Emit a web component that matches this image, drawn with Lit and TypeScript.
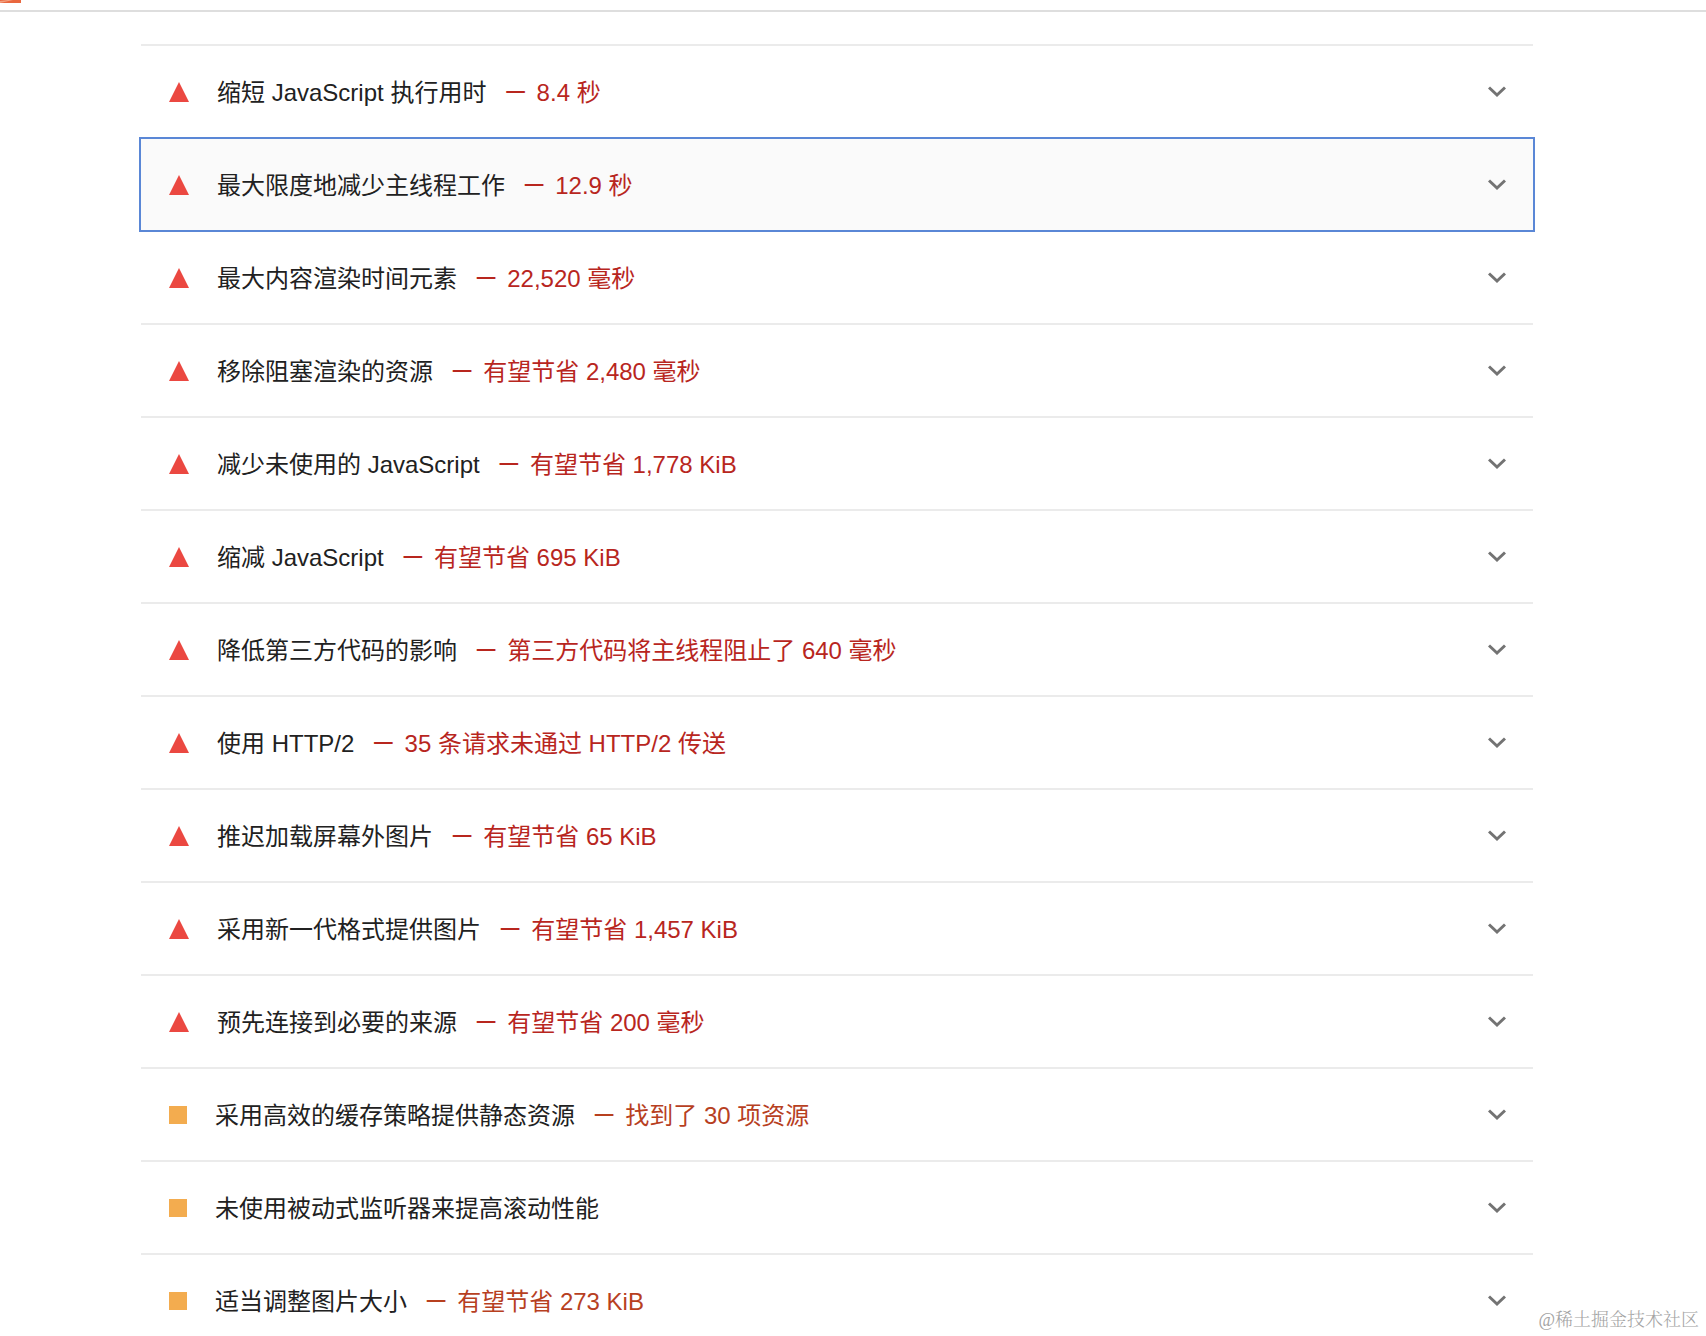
import { LitElement, html, css, svg, nothing } from "lit";
import { customElement, property, state } from "lit/decorators.js";

type Level = "fail" | "average";

interface Audit {
  level: Level;
  title: string;
  detail?: string;
}

const AUDITS: Audit[] = [
  { level: "fail", title: "缩短 JavaScript 执行用时", detail: "8.4 秒" },
  { level: "fail", title: "最大限度地减少主线程工作", detail: "12.9 秒" },
  { level: "fail", title: "最大内容渲染时间元素", detail: "22,520 毫秒" },
  { level: "fail", title: "移除阻塞渲染的资源", detail: "有望节省 2,480 毫秒" },
  { level: "fail", title: "减少未使用的 JavaScript", detail: "有望节省 1,778 KiB" },
  { level: "fail", title: "缩减 JavaScript", detail: "有望节省 695 KiB" },
  { level: "fail", title: "降低第三方代码的影响", detail: "第三方代码将主线程阻止了 640 毫秒" },
  { level: "fail", title: "使用 HTTP/2", detail: "35 条请求未通过 HTTP/2 传送" },
  { level: "fail", title: "推迟加载屏幕外图片", detail: "有望节省 65 KiB" },
  { level: "fail", title: "采用新一代格式提供图片", detail: "有望节省 1,457 KiB" },
  { level: "fail", title: "预先连接到必要的来源", detail: "有望节省 200 毫秒" },
  { level: "average", title: "采用高效的缓存策略提供静态资源", detail: "找到了 30 项资源" },
  { level: "average", title: "未使用被动式监听器来提高滚动性能" },
  { level: "average", title: "适当调整图片大小", detail: "有望节省 273 KiB" },
];

@customElement("audit-row")
export class AuditRow extends LitElement {
  @property({ attribute: false }) audit!: Audit;
  @property({ type: Boolean }) selected = false;

  static styles = css`
    :host {
      display: block;
      border-top: 2px solid #ebebeb;
    }
    .row {
      display: flex;
      align-items: center;
      box-sizing: border-box;
      width: 100%;
      min-height: 91px;
      margin: 0;
      padding: 0 27px 0 28px;
      border: 0;
      background: transparent;
      color: #212121;
      font: inherit;
      text-align: left;
      cursor: pointer;
    }
    .selected {
      background: #fafafa;
      outline: 2px solid #5a87d6;
    }
    .mark {
      flex: none;
      margin-right: 28px;
    }
    .fail .mark {
      fill: #eb4841;
    }
    .average .mark {
      fill: #f3ac4f;
    }
    .text {
      flex: 1;
      padding-top: 2px;
    }
    .detail {
      margin-left: 18px;
    }
    .dash {
      margin-right: 10px;
      font: 28px/24px Lato, sans-serif;
    }
    .fail .detail {
      color: #b8261e;
    }
    .average .detail {
      color: #b7401f;
    }
    .chevron {
      flex: none;
      fill: none;
      stroke: #737373;
      stroke-width: 3;
    }
  `;

  private renderMark() {
    return this.audit.level === "fail"
      ? html`<svg class="mark" width="20" height="20" viewBox="0 0 20 20" aria-hidden="true">
          ${svg`<path d="M10 0 20 20H0Z" />`}
        </svg>`
      : html`<svg class="mark" width="18" height="18" viewBox="0 0 18 18" aria-hidden="true">
          ${svg`<path d="M0 0H18V18H0Z" />`}
        </svg>`;
  }

  render() {
    const { level, title, detail } = this.audit;
    return html`
      <button class="row ${level} ${this.selected ? "selected" : ""}" type="button">
        ${this.renderMark()}
        <span class="text"
          ><span>${title}</span>${detail
            ? html`<span class="detail"><span class="dash">—</span>${detail}</span>`
            : nothing}</span
        >
        <svg class="chevron" width="18" height="12" viewBox="0 0 18 12" aria-hidden="true">
          <path d="M1 1.5 9 9 17 1.5" />
        </svg>
      </button>
    `;
  }
}

@customElement("app-root")
export class AppRoot extends LitElement {
  @state() private selected = 1;

  static styles = css`
    :host {
      display: block;
      position: relative;
      height: 100vh;
      overflow: hidden;
      background: #fff;
      font: 24px/32px "Liberation Sans", "Noto Sans CJK SC", sans-serif;
    }
    .topbar {
      height: 10px;
      border-bottom: 2px solid #dedede;
    }
    .logo {
      display: block;
    }
    .audits {
      display: block;
      margin: 0;
      padding: 32px 173px 0 141px;
      list-style: none;
    }
    .watermark {
      position: absolute;
      right: 7px;
      bottom: 4px;
      color: #a3a3a3;
      font: 300 18px/24px "Liberation Serif", "Noto Serif CJK SC", "Noto Sans CJK SC", serif;
    }
  `;

  render() {
    return html`
      <header class="topbar">
        <svg class="logo" width="21" height="3" viewBox="0 0 21 3" aria-hidden="true">
          <path fill="#e9673f" d="M0 0H21V3H0Z" />
          <path fill="#f3a080" d="M0 1 8 0H13L0 3Z" />
        </svg>
      </header>
      <ul class="audits">
        ${AUDITS.map(
          (audit, i) => html`<li>
            <audit-row
              .audit=${audit}
              ?selected=${i === this.selected}
              @click=${() => (this.selected = i)}
            ></audit-row>
          </li>`
        )}
      </ul>
      <span class="watermark">@稀土掘金技术社区</span>
    `;
  }
}
